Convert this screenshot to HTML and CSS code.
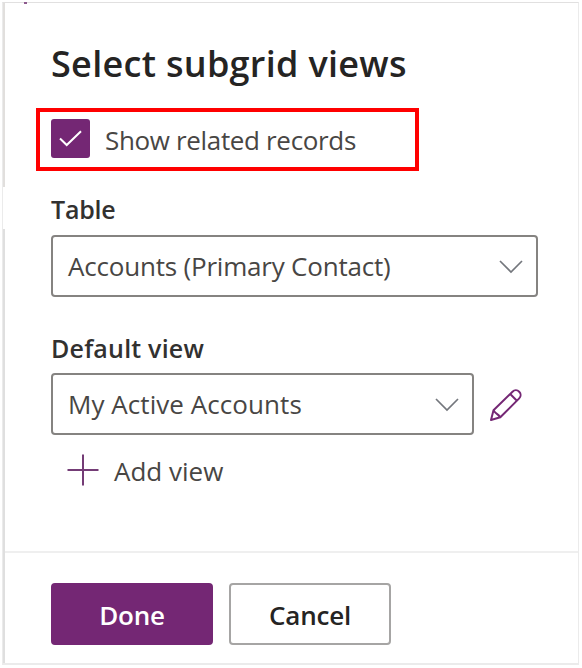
FILE: index.html
```html
<!DOCTYPE html>
<html lang="en">
<head>
<meta charset="utf-8">
<title>Select subgrid views</title>
<link rel="stylesheet" href="styles.css">
</head>
<body>
<div class="panel">
  <span class="edge"></span>
  <span class="speck"></span>
  <main class="content">
    <h1 class="title"><span>Select subgrid views</span></h1>
    <div class="related">
      <span class="checkbox"><svg width="39" height="39" viewBox="0 0 39 39"><path d="M9 19.500l6.700 6.500L30 12.200"/></svg></span>
      <span class="related-text">Show related records</span>
    </div>
    <div class="label label-table"><span>Table</span></div>
    <div class="select select-table">
      <span class="value-table">Accounts (Primary Contact)</span>
      <svg class="chevron" width="24" height="14" viewBox="0 0 24 14"><path d="M1 1l11 11L23 1"/></svg>
    </div>
    <div class="label label-view"><span>Default view</span></div>
    <div class="view-row">
      <div class="select select-view">
        <span class="value-view">My Active Accounts</span>
        <svg class="chevron" width="24" height="14" viewBox="0 0 24 14"><path d="M1 1l11 11L23 1"/></svg>
      </div>
      <svg class="pencil" width="32" height="32" viewBox="0 0 32 32"><path d="M1 31l2.500-9.700L22.500 2.700a4.700 4.700 0 0 1 6.700 6.700L10.300 28.300zM3.500 21.300q1.500 2.300 3.400 3.600t3.400 3.400M20.200 5l6.700 6.700"/></svg>
    </div>
    <div class="add">
      <svg width="32" height="32" viewBox="0 0 32 32"><path d="M0.500 16h31M16 0.500v31"/></svg>
      <span>Add view</span>
    </div>
  </main>
  <footer class="footer">
    <button class="button primary"><span>Done</span></button>
    <button class="button secondary"><span>Cancel</span></button>
  </footer>
</div>
</body>
</html>
```
FILE: styles.css
```css
* { box-sizing: border-box; }
body {
  margin: 0;
  padding: 2px 3px 3px 2px;
  height: 668px;
  background: #fff;
  color: #484644;
  font-family: "Open Sans", "Noto Sans", sans-serif;
  font-size: 26px;
  line-height: 36px;
  white-space: nowrap;
}
svg { display: block; flex: none; fill: none; }
.panel {
  position: relative;
  display: flex;
  flex-direction: column;
  width: 577px;
  height: 663px;
  border: 1px solid #ebebeb;
  border-top-color: #e1e0e0;
  border-bottom: 2px solid #ebebeb;
}
.edge {
  position: absolute;
  left: 0;
  top: 0;
  bottom: 0;
  width: 2px;
  background: linear-gradient(#e1dfdd 184px, #fff 184px, #fff 226px, #dfdfdf 226px);
}
.speck {
  position: absolute;
  left: 21px;
  top: -1px;
  width: 3px;
  height: 2px;
  background: #8d5a8e;
}
.content { height: 548px; padding-left: 48px; }
.title {
  margin: 35px 0 0;
  height: 52px;
  color: #252423;
  font-size: 36px;
  font-weight: 600;
  line-height: 52px;
  letter-spacing: 0.3px;
}
.related {
  display: flex;
  align-items: center;
  width: 383px;
  height: 63px;
  margin: 18px 0 0 -15px;
  padding-left: 11px;
  border: 4px solid #ff0000;
}
.checkbox {
  width: 39px;
  height: 39px;
  margin-top: -2px;
  border-radius: 3px;
  background: #742774;
}
.checkbox path { stroke: #fff; stroke-width: 2; }
.related-text { margin-left: 15px; letter-spacing: -0.34px; }
.label {
  height: 36px;
  color: #323130;
  font-size: 25px;
  font-weight: 600;
}
.label-table { margin-top: 20px; letter-spacing: -0.2px; }
.label-view { margin-top: 33px; letter-spacing: 0.2px; }
.select {
  display: flex;
  align-items: center;
  justify-content: space-between;
  height: 62px;
  padding: 0 13px 0 15px;
  border: 2px solid #858381;
  border-radius: 4px;
}
.select-table { width: 487px; margin-top: 8px; }
.value-table { letter-spacing: -0.2px; }
.value-view { letter-spacing: 0.06px; }
.select-view { width: 423px; }
.chevron { margin-top: 1px; }
.chevron path { stroke: #74777d; stroke-width: 1.7; }
.view-row { display: flex; align-items: center; margin-top: 7px; }
.pencil { margin: 2px 0 0 16px; }
.pencil path { stroke: #742774; stroke-width: 2; stroke-linejoin: round; }
.add { display: flex; align-items: center; height: 36px; margin: 18px 0 0 16px; gap: 15px; }
.add svg { margin: -3px 0 0 0; }
.add path { stroke: #743c76; stroke-width: 2; }
.footer {
  display: flex;
  gap: 16px;
  flex: 1;
  padding: 30px 0 0 48px;
  border-top: 2px solid #efefef;
}
.button {
  width: 162px;
  height: 62px;
  padding: 2px 0 0;
  border: 2px solid #a6a5a4;
  border-radius: 4px;
  background: #fff;
  color: #252423;
  font: 600 26px/36px "Open Sans", "Noto Sans", sans-serif;
  letter-spacing: -0.2px;
}
.primary { border-color: #742774; background: #742774; color: #fff; }
```
